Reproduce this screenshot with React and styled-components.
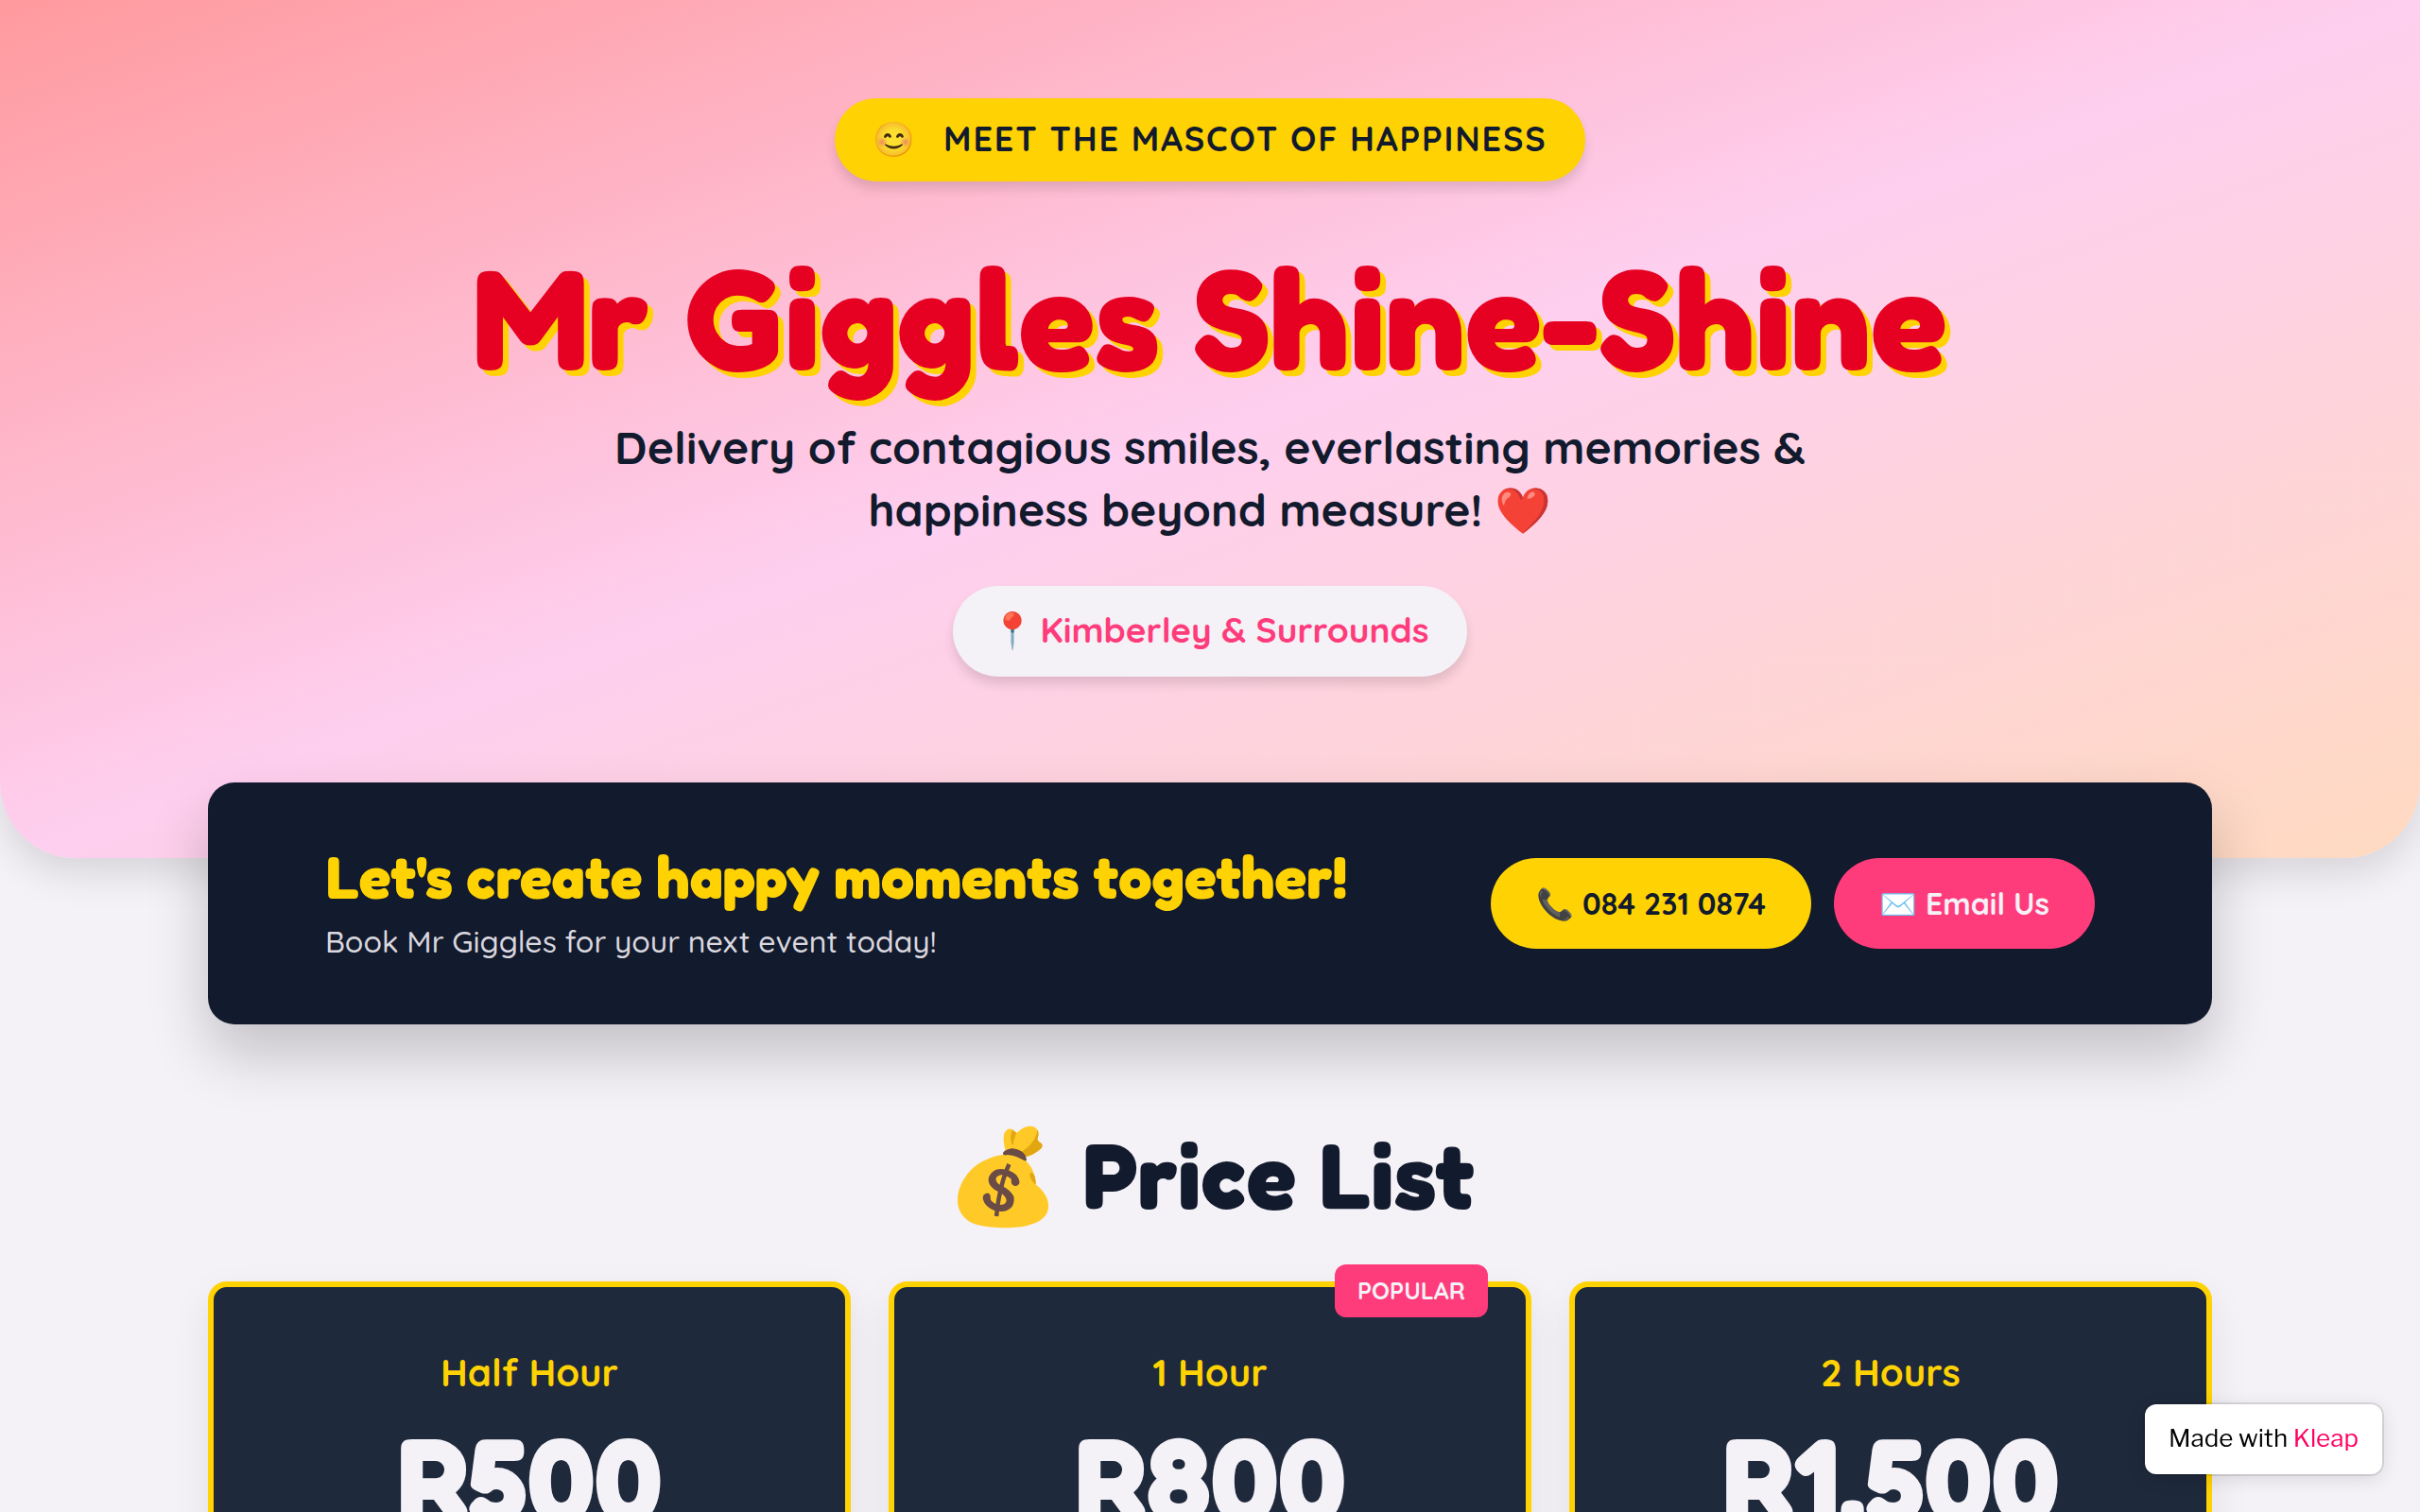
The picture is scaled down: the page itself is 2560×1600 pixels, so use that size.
import React, { Component } from 'react';
import styled, { createGlobalStyle } from 'styled-components';

const yellow = '#ffd203';
const pink = '#ff3c7b';
const navy = '#121a2d';
const paper = '#f4f1f7';
const display = '"Fredoka One", "Fredoka", "Quicksand", "Noto Color Emoji", sans-serif';

const GlobalStyle = createGlobalStyle`
    * {
        box-sizing: border-box;
    }
    body {
        margin: 0;
        overflow-x: hidden;
        background: ${paper};
        color: ${navy};
        font-family: "Quicksand", "Inter", "Noto Color Emoji", sans-serif;
    }
    h1, h2, h3, p {
        margin: 0;
    }
`

const Hero = styled.header`
    display: flex;
    flex-direction: column;
    align-items: center;
    padding: 104px 48px 192px;
    border-radius: 0 0 80px 80px;
    background: linear-gradient(to bottom right, #ff9a9e, #fecfef, #ffdac1);
    box-shadow: 0 16px 40px rgba(0, 0, 0, 0.12);
    text-align: center;
`

const Pill = styled.div`
    display: flex;
    align-items: center;
    gap: ${props => props.$gap};
    height: ${props => props.$height};
    padding: 0 40px 4px;
    border-radius: 48px;
    background: ${props => props.$background};
    box-shadow: 0 8px 12px rgba(0, 0, 0, 0.12);
    color: ${props => props.$color};
    font-size: ${props => props.$size};
    font-weight: 700;
    letter-spacing: ${props => props.$spacing || 'normal'};
    white-space: nowrap;
`

const Heading = styled.h1`
    margin: 60px 0 20px;
    color: #e60022;
    font-family: ${display};
    font-size: 150px;
    font-weight: 900;
    line-height: 168px;
    text-shadow: 6px 6px 0 ${yellow};
`

const Tagline = styled.p`
    max-width: 1344px;
    margin-bottom: 48px;
    font-size: 48px;
    font-weight: 700;
    line-height: 66px;
`

const Container = styled.main`
    max-width: 2120px;
    margin: -80px auto 0;
    padding-bottom: 96px;
`

const ContactBar = styled.section`
    display: flex;
    align-items: center;
    justify-content: space-between;
    padding: 64px 124px;
    border-radius: 28px;
    background: ${navy};
    box-shadow: 0 32px 64px rgba(0, 0, 0, 0.2);
`

const ContactTitle = styled.h2`
    margin-bottom: 10px;
    color: ${yellow};
    font-family: ${display};
    font-size: 63px;
    font-weight: 900;
    line-height: 70px;
`

const ContactText = styled.p`
    color: #dad7df;
    font-size: 32px;
    font-weight: 500;
    line-height: 48px;
`

const Buttons = styled.div`
    display: flex;
    gap: 24px;
`

const ContactButton = styled.a`
    display: flex;
    align-items: center;
    height: 96px;
    padding: 0 48px;
    border-radius: 48px;
    background: ${props => props.$background};
    color: ${props => props.$color};
    font-size: 32px;
    font-weight: 700;
    text-decoration: none;
    white-space: nowrap;
`

const SectionTitle = styled.h2`
    margin: 96px 0 50px;
    font-family: ${display};
    font-size: 98px;
    font-weight: 900;
    line-height: 126px;
    text-align: center;
`

const Cards = styled.div`
    display: grid;
    grid-template-columns: repeat(3, 1fr);
    gap: 40px;
`

const Card = styled.article`
    position: relative;
    padding: 62px 48px;
    border: 6px solid ${yellow};
    border-radius: 20px;
    background: #1e293b;
    box-shadow: 0 16px 40px rgba(0, 0, 0, 0.08);
    text-align: center;
`

const Popular = styled.span`
    position: absolute;
    top: -24px;
    right: 40px;
    padding: 0 24px;
    border-radius: 12px;
    background: ${pink};
    color: ${paper};
    font-size: 25px;
    font-weight: 700;
    line-height: 56px;
`

const Duration = styled.h3`
    margin-bottom: 24px;
    color: ${yellow};
    font-size: 40px;
    font-weight: 700;
    line-height: 56px;
`

const Price = styled.p`
    color: ${paper};
    font-family: ${display};
    font-size: 126px;
    font-weight: 900;
    line-height: 120px;
`

const MadeWith = styled.a`
    position: fixed;
    right: 40px;
    bottom: 40px;
    padding: 0 25px 2px;
    border-radius: 12px;
    background: #ffffff;
    box-shadow: 0 0 0 2px rgba(0, 0, 0, 0.1), 0 4px 20px rgba(0, 0, 0, 0.12);
    color: #000000;
    font-size: 26px;
    line-height: 72px;
    text-decoration: none;
    font-family: "Libre Franklin", "Public Sans", "Liberation Sans", sans-serif;

    span {
        color: #ff0060;
    }
`

const prices = [
    { duration: 'Half Hour', price: 'R500' },
    { duration: '1 Hour', price: 'R800', popular: true },
    { duration: '2 Hours', price: 'R1,500' },
];

class PriceCard extends Component {
    render() {
        const { duration, price, popular } = this.props;

        return (
            <Card>
                {popular ? <Popular>POPULAR</Popular> : null}
                <Duration>{duration}</Duration>
                <Price>{price}</Price>
            </Card>
        );
    }
}

class App extends Component {
    render() {
        return (
            <>
                <GlobalStyle />
                <Hero>
                    <Pill $background={yellow} $color={navy} $height="88px" $size="36px" $gap="28px" $spacing="0.05em">
                        <span>😊</span>
                        <span>MEET THE MASCOT OF HAPPINESS</span>
                    </Pill>
                    <Heading>Mr Giggles Shine-Shine</Heading>
                    <Tagline>Delivery of contagious smiles, everlasting memories &amp; happiness beyond measure! ❤️</Tagline>
                    <Pill $background={paper} $color={pink} $height="96px" $size="37px" $gap="6px">
                        <span>📍</span>
                        <span>Kimberley &amp; Surrounds</span>
                    </Pill>
                </Hero>
                <Container>
                    <ContactBar>
                        <div>
                            <ContactTitle>Let's create happy moments together!</ContactTitle>
                            <ContactText>Book Mr Giggles for your next event today!</ContactText>
                        </div>
                        <Buttons>
                            <ContactButton href="tel:0842310874" $background={yellow} $color={navy}>📞 084 231 0874</ContactButton>
                            <ContactButton href="mailto:" $background={pink} $color={paper}>✉️ Email Us</ContactButton>
                        </Buttons>
                    </ContactBar>
                    <SectionTitle>💰 Price List</SectionTitle>
                    <Cards>
                        {prices.map(item => (
                            <PriceCard key={item.duration} {...item} />
                        ))}
                    </Cards>
                </Container>
                <MadeWith href="#">Made with <span>Kleap</span></MadeWith>
            </>
        );
    }
}

export default App;
